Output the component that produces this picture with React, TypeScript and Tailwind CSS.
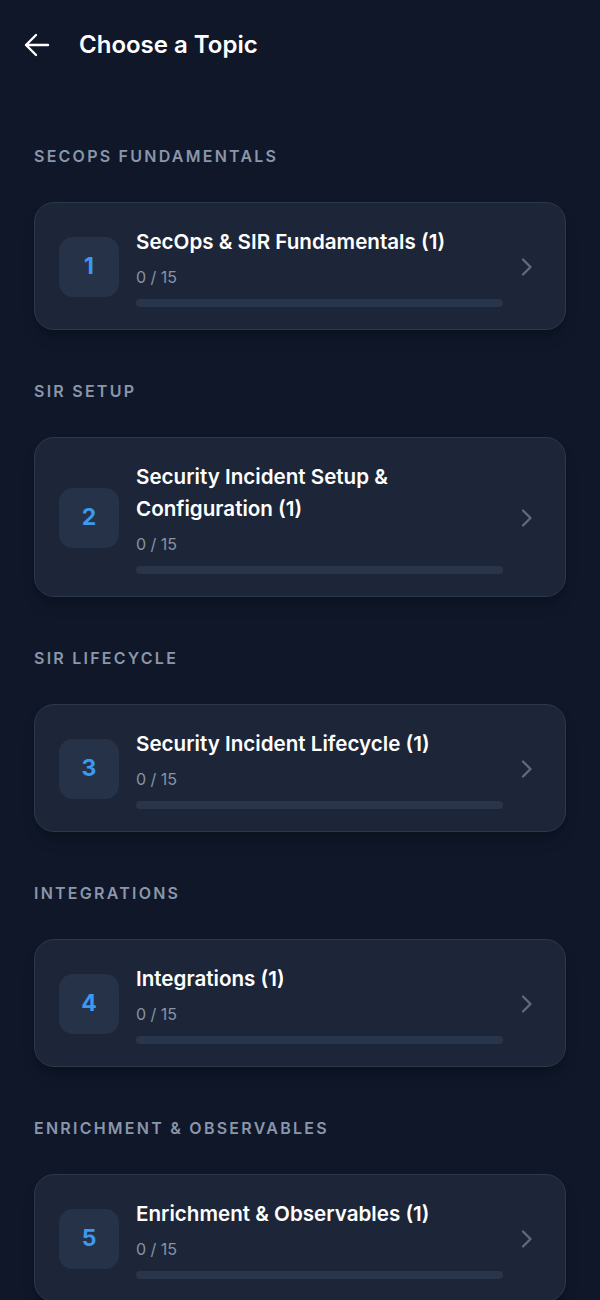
import React from 'react';

// Topic sections shown on the picker
interface Topic {
  id: number;
  section: string;
  title: string;
  done: number;
  total: number;
}

const topics: Topic[] = [
  { id: 1, section: 'SecOps Fundamentals', title: 'SecOps & SIR Fundamentals (1)', done: 0, total: 15 },
  { id: 2, section: 'SIR Setup', title: 'Security Incident Setup & Configuration (1)', done: 0, total: 15 },
  { id: 3, section: 'SIR Lifecycle', title: 'Security Incident Lifecycle (1)', done: 0, total: 15 },
  { id: 4, section: 'Integrations', title: 'Integrations (1)', done: 0, total: 15 },
  { id: 5, section: 'Enrichment & Observables', title: 'Enrichment & Observables (1)', done: 0, total: 15 },
];

function TopicCard({ topic }: { topic: Topic }) {
  const pct = topic.total ? (topic.done / topic.total) * 100 : 0;
  return (
    <div className="flex items-center rounded-[20px] border border-[#2c384c] bg-[#1d2638] pl-6 pr-6 pt-[23px] pb-[22px] shadow-lg shadow-black/20">
      <div className="flex h-[60px] w-[60px] shrink-0 items-center justify-center rounded-[14px] bg-[#263247]">
        <span className="text-[23px] font-bold text-[#3a9af2]">{topic.id}</span>
      </div>
      <div className="ml-[17px] flex-1 min-w-0">
        <h3 className="text-[20.6px] font-semibold leading-8 text-white">{topic.title}</h3>
        <p className="mt-[7px] text-base leading-6 text-[#8793a6]">
          {topic.done} / {topic.total}
        </p>
        <div className="mt-[10px] h-2 w-full rounded-full bg-[#29354a]">
          <div className="h-2 rounded-full bg-[#3a9af2]" style={{ width: `${pct}%` }} />
        </div>
      </div>
      <div className="ml-[18px] flex w-5 shrink-0 justify-start">
        <svg width="14" height="20" viewBox="0 0 14 20" fill="none">
          <path d="M2 2.5 L9.5 10 L2 17.5" stroke="#606c80" strokeWidth="2.2" strokeLinecap="round" strokeLinejoin="round" />
        </svg>
      </div>
    </div>
  );
}

export default function App() {
  return (
    <div className="min-h-[1300px] bg-[#0f1729] font-['Inter','Liberation_Sans',sans-serif] text-white">
      <header className="flex items-center pl-6 pt-[29px]">
        <button className="flex h-8 w-[26px] items-center">
          <svg width="26" height="24" viewBox="0 0 26 24" fill="none">
            <path d="M12 2 L2 12 L12 22 M2 12 H24" stroke="white" strokeWidth="2.4" strokeLinecap="round" strokeLinejoin="round" />
          </svg>
        </button>
        <h1 className="ml-[29px] text-2xl font-semibold leading-8">Choose a Topic</h1>
      </header>

      <main className="px-[34px] pt-[85px] pb-10">
        {topics.map((topic, i) => (
          <section key={topic.id} className={i === 0 ? '' : 'mt-[51px]'}>
            <h2 className="mb-9 text-[16px] font-semibold uppercase leading-5 tracking-[0.14em] text-[#8a96aa]">
              {topic.section}
            </h2>
            <TopicCard topic={topic} />
          </section>
        ))}
      </main>
    </div>
  );
}
